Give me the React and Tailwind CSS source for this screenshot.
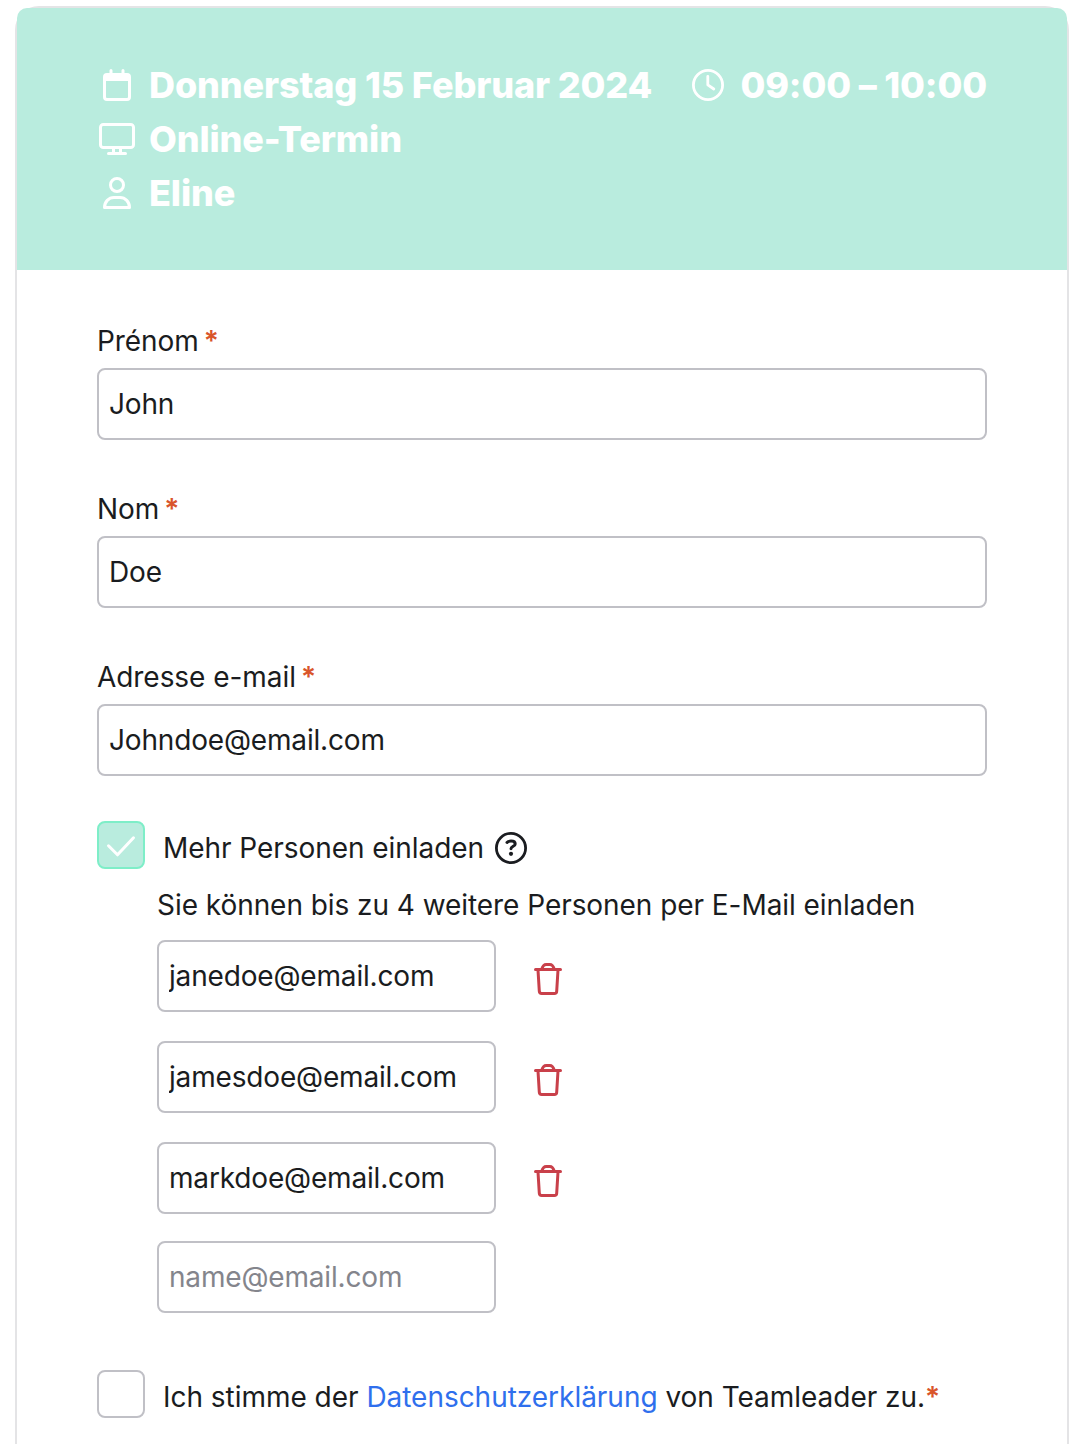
import React, { useState } from "react";

const fields = [
  { key: "firstName", label: "Prénom", type: "text" },
  { key: "lastName", label: "Nom", type: "text" },
  { key: "email", label: "Adresse e-mail", type: "text" },
];

const CalendarIcon = () => (
  <svg className="w-9 h-9 shrink-0" viewBox="0 0 36 36" fill="none" stroke="currentColor" strokeLinecap="round">
    <rect x="5.5" y="7.5" width="25" height="25" rx="2.5" strokeWidth="3" />
    <path d="M5 8h26v6H5z" fill="currentColor" stroke="none" />
    <path d="M12 3.5V8M24 3.5V8" strokeWidth="3" />
  </svg>
);

const MonitorIcon = () => (
  <svg className="w-9 h-9 shrink-0" viewBox="0 0 36 36" fill="none" stroke="currentColor" strokeLinecap="round">
    <rect x="1.5" y="3.5" width="33" height="23" rx="2.8" strokeWidth="3" />
    <path d="M14.5 28v4M21.5 28v4" strokeWidth="3" strokeLinecap="butt" />
    <path d="M9.5 32.5h17" strokeWidth="3" />
  </svg>
);

const PersonIcon = () => (
  <svg className="w-9 h-9 shrink-0" viewBox="0 0 36 36" fill="none" stroke="currentColor" strokeWidth="3" strokeLinejoin="round">
    <circle cx="18" cy="10" r="6.5" />
    <path d="M5.5 32.5c0-5.6 4.2-10 9.5-10h6c5.3 0 9.5 4.4 9.5 10z" />
  </svg>
);

const ClockIcon = () => (
  <svg className="w-9 h-9 shrink-0" viewBox="0 0 36 36" fill="none" stroke="currentColor" strokeLinecap="round" strokeLinejoin="round">
    <circle cx="18" cy="18" r="14.6" strokeWidth="2.8" />
    <path d="M17.8 9.4v8.4l6 4.2" strokeWidth="2.8" />
  </svg>
);

const HelpIcon = () => (
  <svg className="w-8 h-8 shrink-0" viewBox="0 0 32 32" fill="none" stroke="currentColor" strokeLinecap="round" strokeLinejoin="round">
    <circle cx="16" cy="16" r="14.6" strokeWidth="2.8" />
    <path d="M12 10.4c0.900-1 2.300-1.300 4-1.300 2.500 0 4.200 1 4.200 2.800 0 2.300-4.100 2.500-4.200 4.900" strokeWidth="3" />
    <circle cx="16" cy="21.8" r="2.1" fill="currentColor" stroke="none" />
  </svg>
);

const TrashIcon = () => (
  <svg className="w-7 h-8" viewBox="0 0 28 32" fill="none" stroke="currentColor" strokeWidth="3" strokeLinecap="round" strokeLinejoin="round">
    <path d="M1.5 6.5h25" />
    <path d="M4 7l1.300 21.200a2.400 2.400 0 0 0 2.400 2.300h12.600a2.400 2.400 0 0 0 2.400-2.300L24 7" />
    <path d="M7.800 6c.9-3 2.300-4.500 4.400-4.500h3.600c2.100 0 3.500 1.500 4.400 4.500" />
  </svg>
);

const Required = () => <span className="text-[#d9552b] font-semibold">*</span>;

const Checkbox = ({ checked, onChange }) => (
  <button
    type="button"
    role="checkbox"
    aria-checked={checked}
    onClick={() => onChange(!checked)}
    className={`w-12 h-12 shrink-0 rounded-lg border-2 text-white ${
      checked ? "bg-[#b9ecde] border-[#7eeec8]" : "bg-white border-[#c0c0c6]"
    }`}
  >
    {checked && (
      <svg className="w-11 h-11" viewBox="0 0 44 44" fill="none" stroke="currentColor" strokeWidth="3" strokeLinecap="round" strokeLinejoin="round">
        <path d="M9.5 22.8l9 9L34.5 14.8" />
      </svg>
    )}
  </button>
);

const inputClass =
  "h-18 rounded-lg border-2 border-[#c0c0c6] bg-white px-2.5 tracking-[-0.17px] outline-none placeholder:text-[#84858c] focus:border-[#7eeec8]";

export default function App() {
  const [values, setValues] = useState({
    firstName: "John",
    lastName: "Doe",
    email: "Johndoe@email.com",
  });
  const [inviteMore, setInviteMore] = useState(true);
  const [consent, setConsent] = useState(false);
  const [guests, setGuests] = useState(["janedoe@email.com", "jamesdoe@email.com", "markdoe@email.com"]);
  const [newGuest, setNewGuest] = useState("");

  const updateGuest = (idx, value) => {
    setGuests(prev => prev.map((g, i) => (i === idx ? value : g)));
  };

  const removeGuest = (idx) => setGuests(prev => prev.filter((_, i) => i !== idx));

  return (
    <div className="h-[1444px] overflow-hidden bg-white pt-1.5 pl-[15px] pr-[15px] font-['Inter',sans-serif] text-[28px] tracking-[-0.055px] text-[#1a1c20]">
      <div className="h-[1500px] rounded-[24px] border-2 border-[#e4e4e6]">
        {/* Termin */}
        <header className="h-[262px] rounded-t-[10px] bg-[#b9ecde] px-20 pt-[50px] text-[36px] font-extrabold leading-[54px] tracking-[-0.13px] text-white">
          <div className="flex items-center justify-between">
            <div className="flex items-center gap-3.5 pl-0.5 whitespace-nowrap">
              <CalendarIcon />
              <span>Donnerstag 15 Februar 2024</span>
            </div>
            <div className="flex items-center gap-3.5 whitespace-nowrap">
              <ClockIcon />
              <span>09:00 – 10:00</span>
            </div>
          </div>
          <div className="flex items-center gap-3.5 pl-0.5">
            <MonitorIcon />
            <span>Online-Termin</span>
          </div>
          <div className="flex items-center gap-3.5 pl-0.5">
            <PersonIcon />
            <span>Eline</span>
          </div>
        </header>

        <form className="px-20 pt-[50px]" onSubmit={(e) => e.preventDefault()}>
          {fields.map((f) => (
            <div key={f.key} className="mb-12">
              <label className="mb-1.5 flex gap-[5px] leading-[42px]">
                {f.label} <Required />
              </label>
              <input
                type={f.type}
                className={`${inputClass} block w-full`}
                value={values[f.key]}
                onChange={(e) => setValues({ ...values, [f.key]: e.target.value })}
              />
            </div>
          ))}

          {/* Weitere Personen */}
          <div className="-mt-[3px] flex h-12 gap-[18px]">
            <Checkbox checked={inviteMore} onChange={setInviteMore} />
            <div className="flex h-[54px] items-center gap-[11px]">
              <span>Mehr Personen einladen</span>
              <HelpIcon />
            </div>
          </div>

          {inviteMore && (
            <div className="ml-[60px] pt-[15px]">
              <p className="mb-3.5 leading-[42px]">Sie können bis zu 4 weitere Personen per E-Mail einladen</p>
              {guests.map((g, idx) => (
                <div key={idx} className="mb-[29px] flex items-center gap-[38px] last-of-type:mb-[27px]">
                  <input
                    type="text"
                    className={`${inputClass} w-[339px]`}
                    value={g}
                    onChange={(e) => updateGuest(idx, e.target.value)}
                  />
                  <button type="button" className="pt-1.5 text-[#c9404a]" onClick={() => removeGuest(idx)} title="Löschen">
                    <TrashIcon />
                  </button>
                </div>
              ))}
              <input
                type="text"
                placeholder="name@email.com"
                className={`${inputClass} block w-[339px]`}
                value={newGuest}
                onChange={(e) => setNewGuest(e.target.value)}
              />
            </div>
          )}

          <div className="mt-[57px] flex gap-[18px]">
            <Checkbox checked={consent} onChange={setConsent} />
            <p className="leading-[54px] tracking-[-0.03px]">
              Ich stimme der{" "}
              <a href="#" className="text-[#2f6fed]">Datenschutzerklärung</a> von Teamleader zu.<Required />
            </p>
          </div>
        </form>
      </div>
    </div>
  );
}
